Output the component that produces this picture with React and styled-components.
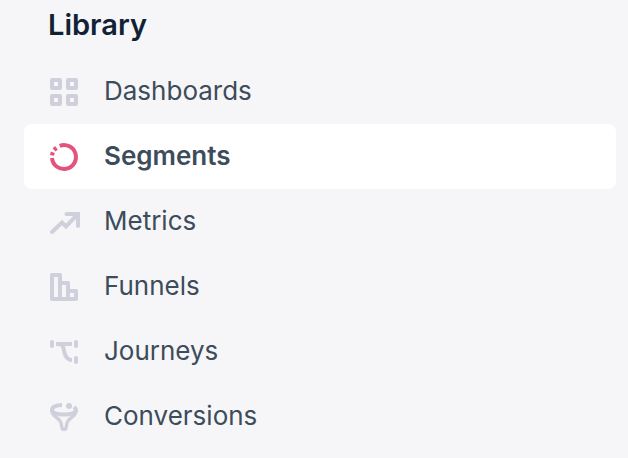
import React from "react";
import styled, { createGlobalStyle } from "styled-components";

const GlobalStyle = createGlobalStyle`
  body {
    margin: 0;
    background-color: #f6f6f8;
    font-family: Inter, "Liberation Sans", sans-serif;
  }
`;

const Sidebar = styled.nav`
  padding: 0 12px 0 24px;
`;

const Title = styled.h2`
  margin: 0;
  padding: 5px 24px 14px;
  font-size: 29px;
  line-height: 40px;
  font-weight: 600;
  color: #102234;
`;

const List = styled.ul`
  margin: 0;
  padding: 0;
  list-style: none;
`;

const Item = styled.a`
  display: flex;
  gap: 24px;
  padding: 17px 24px 16px;
  border-radius: 8px;
  font-size: 26px;
  line-height: 30px;
  font-weight: ${(props) => (props.$active ? 600 : 400)};
  color: #3d4c5a;
  background-color: ${(props) => (props.$active ? "#fff" : "transparent")};
  text-decoration: none;
`;

const Icon = styled.svg`
  flex: none;
  width: 32px;
  height: 32px;
  fill: none;
  stroke: currentColor;
  stroke-width: 4;
  color: ${(props) => (props.$active ? "#e5537d" : "#d0d0dc")};
`;

const items = [
  {
    label: "Dashboards",
    icon: (
      <g strokeLinejoin="round">
        <rect x="4" y="4" width="8" height="8" />
        <rect x="20" y="4" width="8" height="8" />
        <rect x="4" y="20" width="8" height="8" />
        <rect x="20" y="20" width="8" height="8" />
      </g>
    ),
  },
  {
    label: "Segments",
    active: true,
    icon: (
      <>
        <path d="M4 17A12 12 0 1 0 11.7 4.8" />
        <path
          d="M2.8 10.5L6.8 12L6 14.8L2 14ZM7 5L9.8 8.4L7.6 10.6L4.6 7.4Z"
          fill="currentColor"
          stroke="none"
        />
      </>
    ),
  },
  {
    label: "Metrics",
    icon: (
      <>
        <path d="M4 26L14 16.5L18 20.5L29 9" strokeLinecap="round" />
        <path d="M18.5 8H30V20" strokeLinecap="round" />
      </>
    ),
  },
  {
    label: "Funnels",
    icon: (
      <path
        d="M4 4H12V28H4ZM12 12H20V28H12ZM20 20H28V28H20Z"
        strokeLinejoin="round"
      />
    ),
  },
  {
    label: "Journeys",
    icon: (
      <>
        <path d="M4 6V10M28 6V10M28 22V26" strokeLinecap="round" />
        <path d="M8 8H24M10 8C18 8 14.5 16 18 20.5C19.5 22.8 21 24 24 24" />
      </>
    ),
  },
  {
    label: "Conversions",
    icon: (
      <>
        <path d="M14 4C8 4 4 6 4 9C4 12 9 13.5 16 13.5C23 13.5 28 12 28 9C28 8 27 7 26 6" />
        <path
          d="M3.7 9C3.7 16 12 17 13 22L14 27Q14 28.3 16 28.3Q18 28.3 18 27L19 22C20 17 28.3 16 28.3 9"
          strokeWidth="3.4"
        />
        <circle cx="21" cy="5" r="3" fill="currentColor" stroke="none" />
      </>
    ),
  },
];

const App = () => {
  return (
    <>
      <GlobalStyle />
      <Sidebar aria-labelledby="library">
        <Title id="library">Library</Title>
        <List>
          {items.map((item) => (
            <li key={item.label}>
              <Item
                href={`#${item.label.toLowerCase()}`}
                $active={item.active}
                aria-current={item.active ? "page" : undefined}
              >
                <Icon viewBox="0 0 32 32" $active={item.active} aria-hidden="true">
                  {item.icon}
                </Icon>
                {item.label}
              </Item>
            </li>
          ))}
        </List>
      </Sidebar>
    </>
  );
};

export default App;
